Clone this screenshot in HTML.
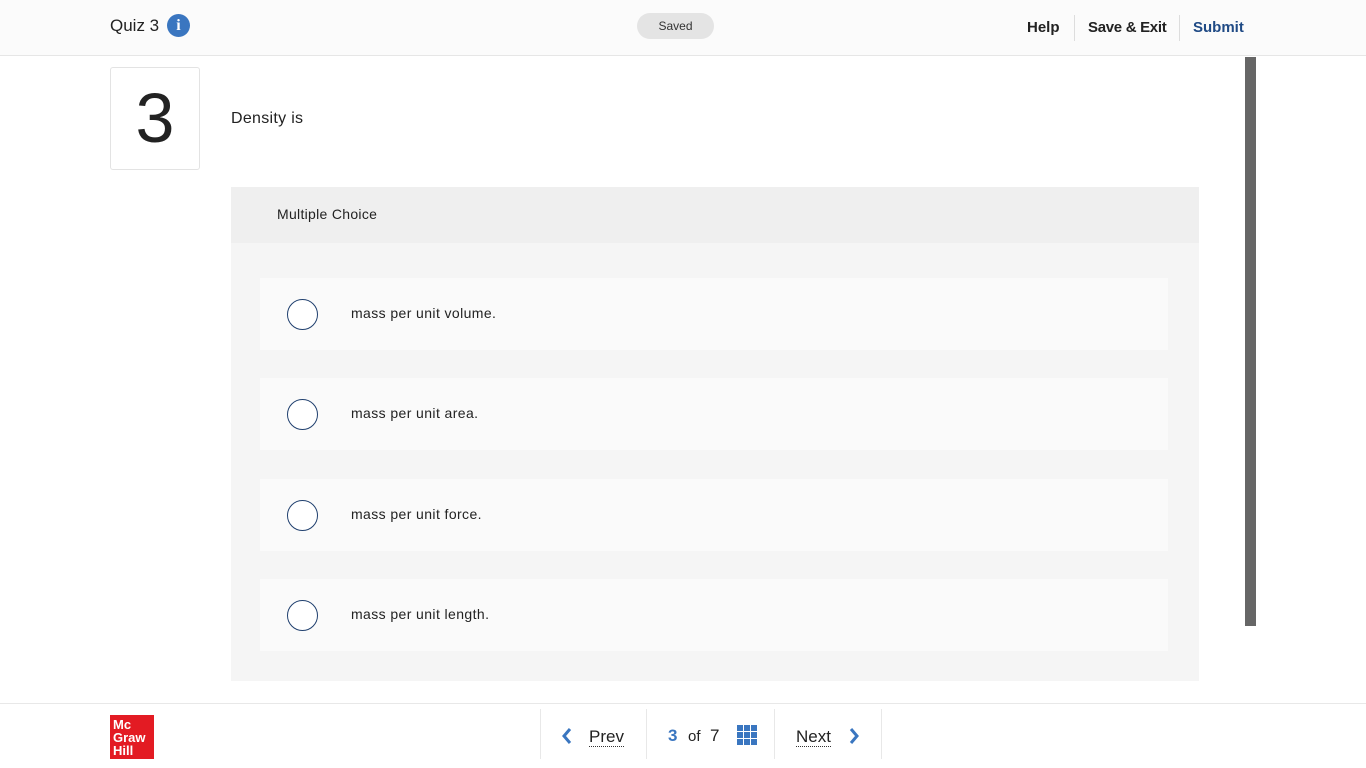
<!DOCTYPE html>
<html><head><style>
*{margin:0;padding:0;box-sizing:border-box}
body{width:1366px;height:768px;background:#fff;font-family:"Liberation Sans",sans-serif;color:#222;position:relative;overflow:hidden}
.hdr{position:absolute;left:0;top:0;width:1366px;height:56px;background:#fbfbfb;border-bottom:1px solid #e6e6e6}
.abs{position:absolute}
.opt{position:absolute;left:260px;width:908px;height:72px;background:#fafafa}
.opt .r{position:absolute;left:27px;top:21px;width:31px;height:31px;border:1.5px solid #1f3f6e;border-radius:50%;background:#fff}
.opt .t{position:absolute;left:91px;top:27px;font-size:14px;color:#222;letter-spacing:0.4px}
.ftr{position:absolute;left:0;top:703px;width:1366px;height:65px;background:#fff;border-top:1px solid #e8e8e8}
.sep{position:absolute;top:709px;width:1px;height:50px;background:#e8e8e8}
</style></head><body>
<div class="hdr">
 <div class="abs" style="left:110px;top:16px;font-size:17px;color:#222">Quiz 3</div>
 <div class="abs" style="left:167px;top:14px;width:23px;height:23px;border-radius:50%;background:#3a76c0;color:#fff;font:bold 16px 'Liberation Serif',serif;text-align:center;line-height:23px">i</div>
 <div class="abs" style="left:637px;top:13px;width:77px;height:26px;border-radius:13px;background:#e4e4e4;font-size:12px;color:#333;text-align:center;line-height:26px">Saved</div>
 <div class="abs" style="left:1027px;top:19px;font-size:15px;font-weight:bold;color:#222">Help</div>
 <div class="abs" style="left:1074px;top:15px;width:1px;height:26px;background:#ddd"></div>
 <div class="abs" style="left:1088px;top:19px;font-size:15px;font-weight:bold;color:#222;letter-spacing:-0.3px">Save &amp; Exit</div>
 <div class="abs" style="left:1179px;top:15px;width:1px;height:26px;background:#ddd"></div>
 <div class="abs" style="left:1193px;top:19px;font-size:15px;font-weight:bold;color:#1f4a85">Submit</div>
</div>
<div class="abs" style="left:110px;top:67px;width:90px;height:103px;border:1px solid #e3e3e3;border-radius:3px;font-size:70px;text-align:center;line-height:101px;color:#222">3</div>
<div class="abs" style="left:231px;top:110px;font-size:16px;letter-spacing:0.3px">Density is</div>
<div class="abs" style="left:1245px;top:57px;width:11px;height:569px;background:#666"></div>
<div class="abs" style="left:231px;top:187px;width:968px;height:494px;background:#f5f5f5"></div>
<div class="abs" style="left:231px;top:187px;width:968px;height:56px;background:#efefef"></div>
<div class="abs" style="left:277px;top:206px;font-size:14px;letter-spacing:0.3px">Multiple Choice</div>
<div class="opt" style="top:278px"><div class="r"></div><div class="t">mass per unit volume.</div></div>
<div class="opt" style="top:378px"><div class="r"></div><div class="t">mass per unit area.</div></div>
<div class="opt" style="top:479px"><div class="r"></div><div class="t">mass per unit force.</div></div>
<div class="opt" style="top:579px"><div class="r"></div><div class="t">mass per unit length.</div></div>
<div class="ftr"></div>
<div class="abs" style="left:110px;top:715px;width:44px;height:44px;background:#e31b23;color:#fff;font:bold 13px/13px 'Liberation Sans',sans-serif;padding:3px 0 0 3px">Mc<br>Graw<br>Hill</div>
<div class="sep" style="left:540px"></div><div class="sep" style="left:646px"></div><div class="sep" style="left:774px"></div><div class="sep" style="left:881px"></div>
<svg class="abs" style="left:561px;top:727px" width="12" height="18"><path d="M9 2L3 9l6 7" stroke="#3a76c0" stroke-width="3" fill="none"/></svg>
<div class="abs" style="left:589px;top:727px;font-size:17px;border-bottom:1px dotted #333;line-height:19px">Prev</div>
<div class="abs" style="left:668px;top:726px;font-size:17px;font-weight:bold;color:#3a76c0">3</div>
<div class="abs" style="left:688px;top:728px;font-size:15px">of</div>
<div class="abs" style="left:710px;top:726px;font-size:17px">7</div>
<svg class="abs" style="left:737px;top:725px" width="20" height="20"><g fill="#3a76c0"><rect x="0" y="0" width="6" height="6"/><rect x="7" y="0" width="6" height="6"/><rect x="14" y="0" width="6" height="6"/><rect x="0" y="7" width="6" height="6"/><rect x="7" y="7" width="6" height="6"/><rect x="14" y="7" width="6" height="6"/><rect x="0" y="14" width="6" height="6"/><rect x="7" y="14" width="6" height="6"/><rect x="14" y="14" width="6" height="6"/></g></svg>
<div class="abs" style="left:796px;top:727px;font-size:17px;border-bottom:1px dotted #333;line-height:19px">Next</div>
<svg class="abs" style="left:848px;top:727px" width="12" height="18"><path d="M3 2l6 7-6 7" stroke="#3a76c0" stroke-width="3" fill="none"/></svg>
</body></html>
